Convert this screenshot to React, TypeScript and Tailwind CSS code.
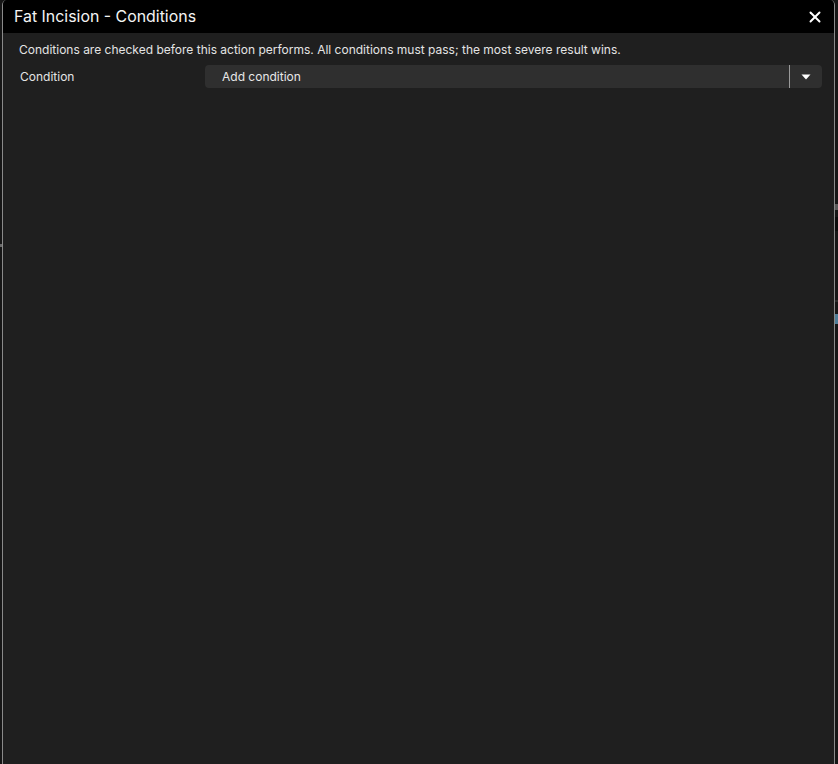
import { X } from 'lucide-react';

export default function App() {
  return (
    <main className="relative w-[838px] h-[764px] overflow-hidden bg-[#161616]" style={{ fontFamily: 'Inter, "Noto Sans", sans-serif' }}>
      {/* bits of the app behind the window */}
      <div className="absolute left-0 top-[244px] w-[2px] h-[3px] bg-[#6b6b6b]" />
      <div className="absolute right-0 top-[204px] w-[3px] h-[6px] bg-[#5a5a5a]" />
      <div className="absolute right-0 top-[217px] w-[3px] h-[14px] bg-[#0b0b0b]" />
      <div className="absolute right-0 top-[300px] w-[3px] h-[2px] bg-[#2c2c2c]" />
      <div className="absolute right-0 top-[314px] w-[3px] h-[10px] bg-[#4f7e98]" />

      {/* Window */}
      <div className="ml-[2px] w-[833px] h-full flex flex-col border-x border-[#8a8a8a] rounded-t-[5px] overflow-hidden">
        {/* Title bar */}
        <div className="h-[33px] shrink-0 bg-black flex items-center justify-between pl-[11px] pr-[10px]">
          <span className="text-[15.9px] text-[#f4f4f4]">Fat Incision - Conditions</span>
          <X className="w-[18px] h-[18px] text-white" strokeWidth={2.6} />
        </div>

        {/* Body */}
        <div className="flex-1 bg-[#1f1f1f] pl-[16px] pr-[12px] pt-[9px]">
          <p className="text-[12px] leading-[16px] text-[#e4e4e4]">
            Conditions are checked before this action performs. All conditions must pass; the most severe result wins.
          </p>

          <div className="mt-[7px] flex items-center">
            <span className="w-[186px] pl-[1px] text-[12px] text-[#e4e4e4]">Condition</span>
            <div className="flex-1 h-[23px] flex items-center rounded-[4px] bg-[#2f2f2f]">
              <span className="flex-1 pl-[17px] text-[12px] text-[#e8e8e8]">Add condition</span>
              <div className="w-px h-full bg-[#9a9a9a]" />
              <div className="w-[32px] h-full flex items-center justify-center">
                <svg width="10" height="6" viewBox="0 0 10 6">
                  <path d="M0.5 0.5 H9.5 L5 5.5 Z" fill="#ffffff" />
                </svg>
              </div>
            </div>
          </div>
        </div>
      </div>
    </main>
  );
}
